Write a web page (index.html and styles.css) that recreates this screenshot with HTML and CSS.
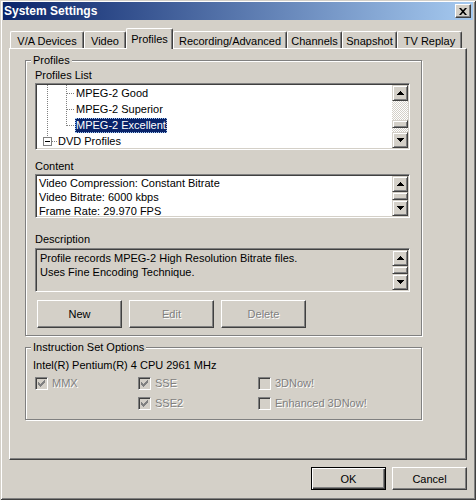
FILE: index.html
```html
<!DOCTYPE html>
<html>
<head>
<meta charset="utf-8">
<title>System Settings</title>
<link rel="stylesheet" href="styles.css">
</head>
<body>
<div class="window">
  <div class="titlebar">
    <span class="title">System Settings</span>
    <span class="close"><svg width="8" height="7" viewBox="0 0 8 7"><path d="M0 0h2l2 2.3L6 0h2L5 3.5 8 7H6L4 4.7 2 7H0l3-3.5z" fill="#000"/></svg></span>
  </div>
  <div class="content">
    <div class="tabs">
      <div class="tab w-va">V/A Devices</div>
      <div class="tab w-video">Video</div>
      <div class="tab active w-prof">Profiles</div>
      <div class="tab w-rec">Recording/Advanced</div>
      <div class="tab w-chan">Channels</div>
      <div class="tab w-snap">Snapshot</div>
      <div class="tab w-tv">TV Replay</div>
    </div>
    <div class="panel">
      <fieldset class="group">
        <legend>Profiles</legend>
        <div class="group-body profiles-body">
          <div class="label first">Profiles List</div>
          <div class="listbox tree">
            <div class="tree-items">
              <div class="row">
                <svg class="guides" width="38" height="16"><line x1="10.5" y1="0" x2="10.5" y2="16" class="dot"/><line x1="29.5" y1="0" x2="29.5" y2="16" class="dot"/><line x1="30" y1="8.5" x2="38" y2="8.5" class="dot"/></svg>
                <span class="item">MPEG-2 Good</span>
              </div>
              <div class="row">
                <svg class="guides" width="38" height="16"><line x1="10.5" y1="0" x2="10.5" y2="16" class="dot"/><line x1="29.5" y1="0" x2="29.5" y2="16" class="dot"/><line x1="30" y1="8.5" x2="38" y2="8.5" class="dot"/></svg>
                <span class="item">MPEG-2 Superior</span>
              </div>
              <div class="row">
                <svg class="guides" width="38" height="16"><line x1="10.5" y1="0" x2="10.5" y2="16" class="dot"/><line x1="29.5" y1="0" x2="29.5" y2="9" class="dot"/><line x1="30" y1="8.5" x2="38" y2="8.5" class="dot"/></svg>
                <span class="item selected">MPEG-2 Excellent</span>
              </div>
              <div class="row">
                <svg class="guides" width="20" height="16"><line x1="10.5" y1="0" x2="10.5" y2="4" class="dot"/><rect x="6.5" y="4.5" width="8" height="8" fill="#fff" stroke="#808080"/><line x1="8" y1="8.5" x2="13" y2="8.5" stroke="#000"/><line x1="15" y1="8.5" x2="20" y2="8.5" class="dot"/></svg>
                <span class="item">DVD Profiles</span>
              </div>
            </div>
            <div class="scrollbar">
              <div class="sbtn"><svg width="7" height="4"><path d="M3 0h1v1h1v1h1v1h1v1H0V3h1V2h1V1h1z" fill="#000"/></svg></div>
              <div class="track"><div class="thumb tree-thumb"></div></div>
              <div class="sbtn"><svg width="7" height="4"><path d="M0 0h7v1H6v1H5v1H4v1H3V3H2V2H1V1H0z" fill="#000"/></svg></div>
            </div>
          </div>
          <div class="label l-content">Content</div>
          <div class="listbox textbox">
            <div class="text content-text">
              <div>Video Compression: Constant Bitrate</div>
              <div>Video Bitrate: 6000 kbps</div>
              <div>Frame Rate: 29.970 FPS</div>
            </div>
            <div class="scrollbar">
              <div class="sbtn"><svg width="7" height="4"><path d="M3 0h1v1h1v1h1v1h1v1H0V3h1V2h1V1h1z" fill="#000"/></svg></div>
              <div class="track"><div class="thumb full"></div></div>
              <div class="sbtn"><svg width="7" height="4"><path d="M0 0h7v1H6v1H5v1H4v1H3V3H2V2H1V1H0z" fill="#000"/></svg></div>
            </div>
          </div>
          <div class="label l-desc">Description</div>
          <div class="listbox textbox readonly">
            <div class="text desc-text">
              <div>Profile records MPEG-2 High Resolution Bitrate files.</div>
              <div>Uses Fine Encoding Technique.</div>
            </div>
            <div class="scrollbar">
              <div class="sbtn"><svg width="7" height="4"><path d="M3 0h1v1h1v1h1v1h1v1H0V3h1V2h1V1h1z" fill="#000"/></svg></div>
              <div class="track"><div class="thumb full"></div></div>
              <div class="sbtn"><svg width="7" height="4"><path d="M0 0h7v1H6v1H5v1H4v1H3V3H2V2H1V1H0z" fill="#000"/></svg></div>
            </div>
          </div>
          <div class="buttons">
            <div class="btn">New</div>
            <div class="btn disabled">Edit</div>
            <div class="btn disabled">Delete</div>
          </div>
        </div>
      </fieldset>
      <fieldset class="group iso">
        <legend>Instruction Set Options</legend>
        <div class="group-body iso-body">
          <div class="cpu">Intel(R) Pentium(R) 4 CPU 2961 MHz</div>
          <div class="checks">
            <div class="check"><span class="box"><svg width="7" height="7"><path d="M0 2h1v3H0zM1 3h1v3H1zM2 4h1v3H2zM3 3h1v3H3zM4 2h1v3H4zM5 1h1v3H5zM6 0h1v3H6z" fill="#808080"/></svg></span><span class="clabel">MMX</span></div>
            <div class="check"><span class="box"><svg width="7" height="7"><path d="M0 2h1v3H0zM1 3h1v3H1zM2 4h1v3H2zM3 3h1v3H3zM4 2h1v3H4zM5 1h1v3H5zM6 0h1v3H6z" fill="#808080"/></svg></span><span class="clabel">SSE</span></div>
            <div class="check"><span class="box"></span><span class="clabel">3DNow!</span></div>
            <div class="check empty"></div>
            <div class="check"><span class="box"><svg width="7" height="7"><path d="M0 2h1v3H0zM1 3h1v3H1zM2 4h1v3H2zM3 3h1v3H3zM4 2h1v3H4zM5 1h1v3H5zM6 0h1v3H6z" fill="#808080"/></svg></span><span class="clabel">SSE2</span></div>
            <div class="check"><span class="box"></span><span class="clabel">Enhanced 3DNow!</span></div>
          </div>
        </div>
      </fieldset>
    </div>
    <div class="footer">
      <div class="btn dlg default">OK</div>
      <div class="btn dlg">Cancel</div>
    </div>
  </div>
</div>
</body>
</html>
```

FILE: styles.css
```css
* { box-sizing: border-box; }

body {
  margin: 0;
  font-family: "Liberation Sans", Arial, sans-serif;
  font-size: 11px;
  color: #000;
  background: #d4d0c8;
}

.window {
  width: 476px;
  height: 500px;
  background: #d4d0c8;
  padding: 2px 3px 3px 3px;
  box-shadow: inset 1px 1px #d4d0c8, inset -1px -1px #404040, inset 2px 2px #fff, inset -2px -2px #808080;
  display: flex;
  flex-direction: column;
}

.titlebar {
  height: 18px;
  flex: none;
  background: linear-gradient(to right, #0a246a, #a6caf0);
  display: flex;
  align-items: center;
  justify-content: space-between;
  padding: 0 2px 0 1px;
}

.title {
  color: #fff;
  font-weight: bold;
  font-size: 12px;
  line-height: 14px;
}

.close {
  width: 16px;
  height: 14px;
  background: #d4d0c8;
  border: 1px solid;
  border-color: #fff #404040 #404040 #fff;
  box-shadow: inset -1px -1px #808080;
  display: flex;
  align-items: center;
  justify-content: center;
  padding-right: 1px;
}

.content {
  flex: 1;
  display: flex;
  flex-direction: column;
  padding: 0 6px 0 6px;
}

.tabs {
  display: flex;
  align-items: flex-end;
  margin-top: 8px;
  margin-bottom: -1px;
  padding-left: 1px;
  position: relative;
  z-index: 1;
  flex: none;
}

.tab {
  height: 17px;
  margin-bottom: 1px;
  border: 1px solid;
  border-color: #fff #404040 transparent #fff;
  border-bottom: none;
  border-radius: 2px 2px 0 0;
  box-shadow: inset -1px 0 #808080;
  background: #d4d0c8;
  display: flex;
  align-items: center;
  justify-content: center;
  padding-top: 2px;
  white-space: nowrap;
}

.tab.active {
  height: 21px;
  margin-bottom: 0;
  padding-top: 0;
  padding-bottom: 1px;
}

.w-va { width: 74px; }
.w-video { width: 42px; }
.w-prof { width: 47px; }
.w-rec { width: 114px; }
.w-chan { width: 55px; }
.w-snap { width: 55px; }
.w-tv { width: 65px; }

.panel {
  height: 412px;
  flex: none;
  border: 1px solid;
  border-color: #fff #404040 #404040 #fff;
  box-shadow: inset -1px -1px #808080;
  padding: 5px 0 0 15px;
}

fieldset.group {
  width: 397px;
  min-width: 0;
  margin: 0;
  padding: 0;
  border: 1px solid #808080;
  box-shadow: inset 1px 1px #fff, 1px 1px #fff;
}

fieldset.group legend {
  margin-left: 5px;
  padding: 0 2px;
  line-height: 13px;
  background: #d4d0c8;
}

fieldset.iso { margin-top: 5px; }

.profiles-body { padding: 0 11px 7px 9px; }

.label { line-height: 13px; }
.label.first { margin-top: 2px; }
.l-content { margin-top: 10px; }
.l-desc { margin-top: 15px; }

.listbox {
  display: flex;
  border: 1px solid;
  border-color: #808080 #fff #fff #808080;
  box-shadow: inset 1px 1px #404040, inset -1px -1px #d4d0c8;
  padding: 1px;
  background: #fff;
  overflow: hidden;
}

.tree {
  margin-top: 1px;
  height: 67px;
}

.tree-items {
  flex: 1;
  overflow: hidden;
}

.row {
  height: 16px;
  display: flex;
  align-items: center;
}

.guides { flex: none; display: block; }
.dot { stroke: #808080; stroke-dasharray: 1 1; }

.item {
  line-height: 16px;
  padding: 0 1px;
  white-space: nowrap;
}

.item.selected {
  background: #0a246a;
  color: #fff;
  line-height: 15px;
  outline: 1px dotted #a6caf0;
  outline-offset: -1px;
}

.scrollbar {
  width: 16px;
  flex: none;
  display: flex;
  flex-direction: column;
}

.sbtn, .thumb {
  background: #d4d0c8;
  border: 1px solid;
  border-color: #d4d0c8 #404040 #404040 #d4d0c8;
  box-shadow: inset 1px 1px #fff, inset -1px -1px #808080;
}

.sbtn {
  height: 16px;
  flex: none;
  display: flex;
  align-items: center;
  justify-content: center;
}

.sbtn svg { display: block; }

.track {
  flex: 1;
  display: flex;
  flex-direction: column;
  background-color: #fff;
  background-image: conic-gradient(#d4d0c8 25%, #fff 0 50%, #d4d0c8 0 75%, #fff 0);
  background-size: 2px 2px;
}

.thumb { height: 8px; flex: none; }
.tree-thumb { margin-top: auto; margin-bottom: 4px; }
.thumb.full { flex: 1; }

.textbox {
  margin-top: 1px;
  height: 44px;
}

.readonly { background: #d4d0c8; margin-top: 2px; }

.text {
  flex: 1;
  line-height: 14px;
  white-space: nowrap;
  overflow: hidden;
}

.content-text { padding-left: 2px; }
.desc-text { padding: 1px 0 0 3px; }

.buttons {
  display: flex;
  gap: 7px;
  margin-top: 8px;
  margin-left: 2px;
}

.btn {
  height: 28px;
  width: 85px;
  background: #d4d0c8;
  border: 1px solid;
  border-color: #fff #404040 #404040 #fff;
  box-shadow: inset -1px -1px #808080;
  display: flex;
  align-items: center;
  justify-content: center;
}

.btn.disabled {
  color: #808080;
  text-shadow: 1px 1px 0 #fff;
}

.iso-body { padding: 0 10px 6px 7px; }

.cpu {
  margin-top: 5px;
  line-height: 13px;
}

.checks {
  display: grid;
  grid-template-columns: 103px 120px 1fr;
  grid-auto-rows: 20px;
  margin-top: 1px;
  margin-left: 2px;
}

.check {
  display: flex;
  align-items: center;
  gap: 4px;
}

.box {
  width: 13px;
  height: 13px;
  flex: none;
  background: #d4d0c8;
  border: 1px solid;
  border-color: #808080 #fff #fff #808080;
  box-shadow: inset 1px 1px #404040, inset -1px -1px #d4d0c8;
  padding: 2px 0 0 2px;
}

.box svg { display: block; }

.clabel {
  color: #808080;
  text-shadow: 1px 1px 0 #fff;
}

.footer {
  display: flex;
  justify-content: flex-end;
  gap: 6px;
  margin-top: 7px;
}

.btn.dlg {
  width: 75px;
  height: 23px;
}

.btn.default {
  border-color: #000;
  box-shadow: inset 1px 1px #fff, inset -1px -1px #404040, inset -2px -2px #808080;
}
```
